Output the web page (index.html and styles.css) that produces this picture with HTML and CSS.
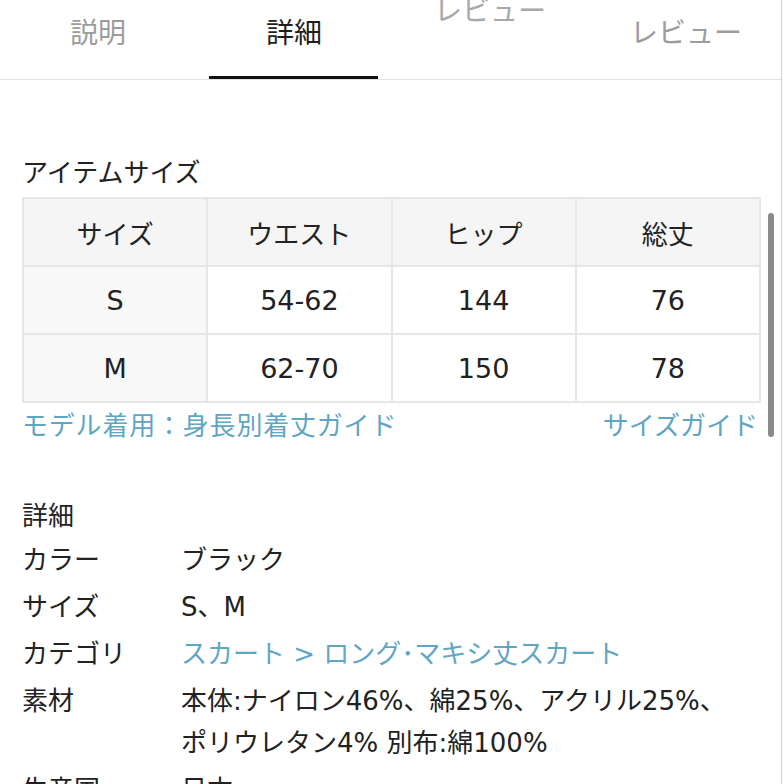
FILE: index.html
```html
<!DOCTYPE html>
<html lang="ja">
<head>
<meta charset="utf-8">
<title>詳細</title>
<link rel="stylesheet" href="styles.css">
</head>
<body>
<div class="page">
  <nav class="tabs">
    <div class="tab">説明</div>
    <div class="tab tab-active">詳細</div>
    <div class="tab tab-glitch">レビュー</div>
    <div class="tab">レビュー</div>
  </nav>

  <section class="sizes">
    <h2 class="section-title">アイテムサイズ</h2>
    <table class="size-table">
      <tr class="head-row"><td>サイズ</td><td>ウエスト</td><td>ヒップ</td><td>総丈</td></tr>
      <tr><td class="size-name">S</td><td>54-62</td><td>144</td><td>76</td></tr>
      <tr><td class="size-name">M</td><td>62-70</td><td>150</td><td>78</td></tr>
    </table>
    <div class="guide-links">
      <span class="link link-model">モデル着用：身長別着丈ガイド</span>
      <span class="link">サイズガイド</span>
    </div>
  </section>

  <section class="details">
    <h2 class="section-title">詳細</h2>
    <dl class="spec">
      <dt>カラー</dt><dd>ブラック</dd>
      <dt>サイズ</dt><dd>S、M</dd>
      <dt>カテゴリ</dt><dd class="link">スカート &gt; ロング･マキシ丈スカート</dd>
      <dt>素材</dt><dd class="material"><span class="line">本体:ナイロン46%、綿25%、アクリル25%、</span><span class="line">ポリウレタン4% 別布:綿100%</span></dd>
      <dt>生産国</dt><dd>日本</dd>
    </dl>
  </section>

  <div class="scrollbar"></div>
</div>
</body>
</html>
```

FILE: styles.css
```css
html, body {
  margin: 0;
  padding: 0;
  background: #ffffff;
}

body {
  width: 784px;
  height: 784px;
  overflow: hidden;
  font-family: "DejaVu Sans", "Noto Sans CJK JP", sans-serif;
  color: #222222;
}

.page {
  position: relative;
  width: 781px;
  height: 784px;
  border-right: 1px solid #cfcfcf;
}

.tabs {
  display: grid;
  grid-template-columns: repeat(4, 196px);
  height: 79px;
  border-bottom: 1px solid #e2e2e2;
}

.tab {
  position: relative;
  box-sizing: border-box;
  height: 79px;
  padding-top: 14px;
  line-height: 40px;
  font-size: 28px;
  text-align: center;
  color: #9c9c9c;
}

.tab-active {
  color: #1e1e1e;
}

.tab-active::after {
  content: "";
  position: absolute;
  left: 13px;
  right: 14px;
  bottom: 0;
  height: 3px;
  background: #111111;
}

.tab-glitch {
  transform: translateY(-22px);
  color: #a8a8a8;
}

.section-title {
  margin: 0;
  font-size: 26px;
  font-weight: normal;
  line-height: 36px;
}

.sizes {
  padding: 75px 20px 0 22px;
}

.size-table {
  margin-top: 6px;
  width: 739px;
  border-collapse: collapse;
  table-layout: fixed;
}

.size-table td {
  height: 66px;
  border: 2px solid #e6e6e6;
  text-align: center;
  font-size: 26px;
  color: #222222;
  padding: 0;
}

.size-table tr:not(.head-row) td {
  font-size: 27px;
}

.head-row td {
  background: #f5f5f5;
}

.size-table .size-name {
  background: #f8f8f8;
}

.guide-links {
  display: flex;
  justify-content: space-between;
  margin-top: 5px;
  padding-right: 3px;
  font-size: 26px;
  line-height: 36px;
}

.link {
  color: #5fa6c2;
}

.link-model {
  letter-spacing: 0.8px;
}

.details {
  padding: 54px 0 0 22px;
}

.spec {
  display: grid;
  grid-template-columns: 159px 1fr;
  margin: 3px 0 0;
  font-size: 26px;
  line-height: 47px;
}

.spec dt,
.spec dd {
  margin: 0;
}

.spec .line {
  display: block;
  white-space: nowrap;
}

.material .line + .line {
  margin-top: -5px;
}

.scrollbar {
  position: absolute;
  left: 768px;
  top: 213px;
  width: 6px;
  height: 224px;
  border-radius: 3px;
  background: #8a8a8a;
}
```
